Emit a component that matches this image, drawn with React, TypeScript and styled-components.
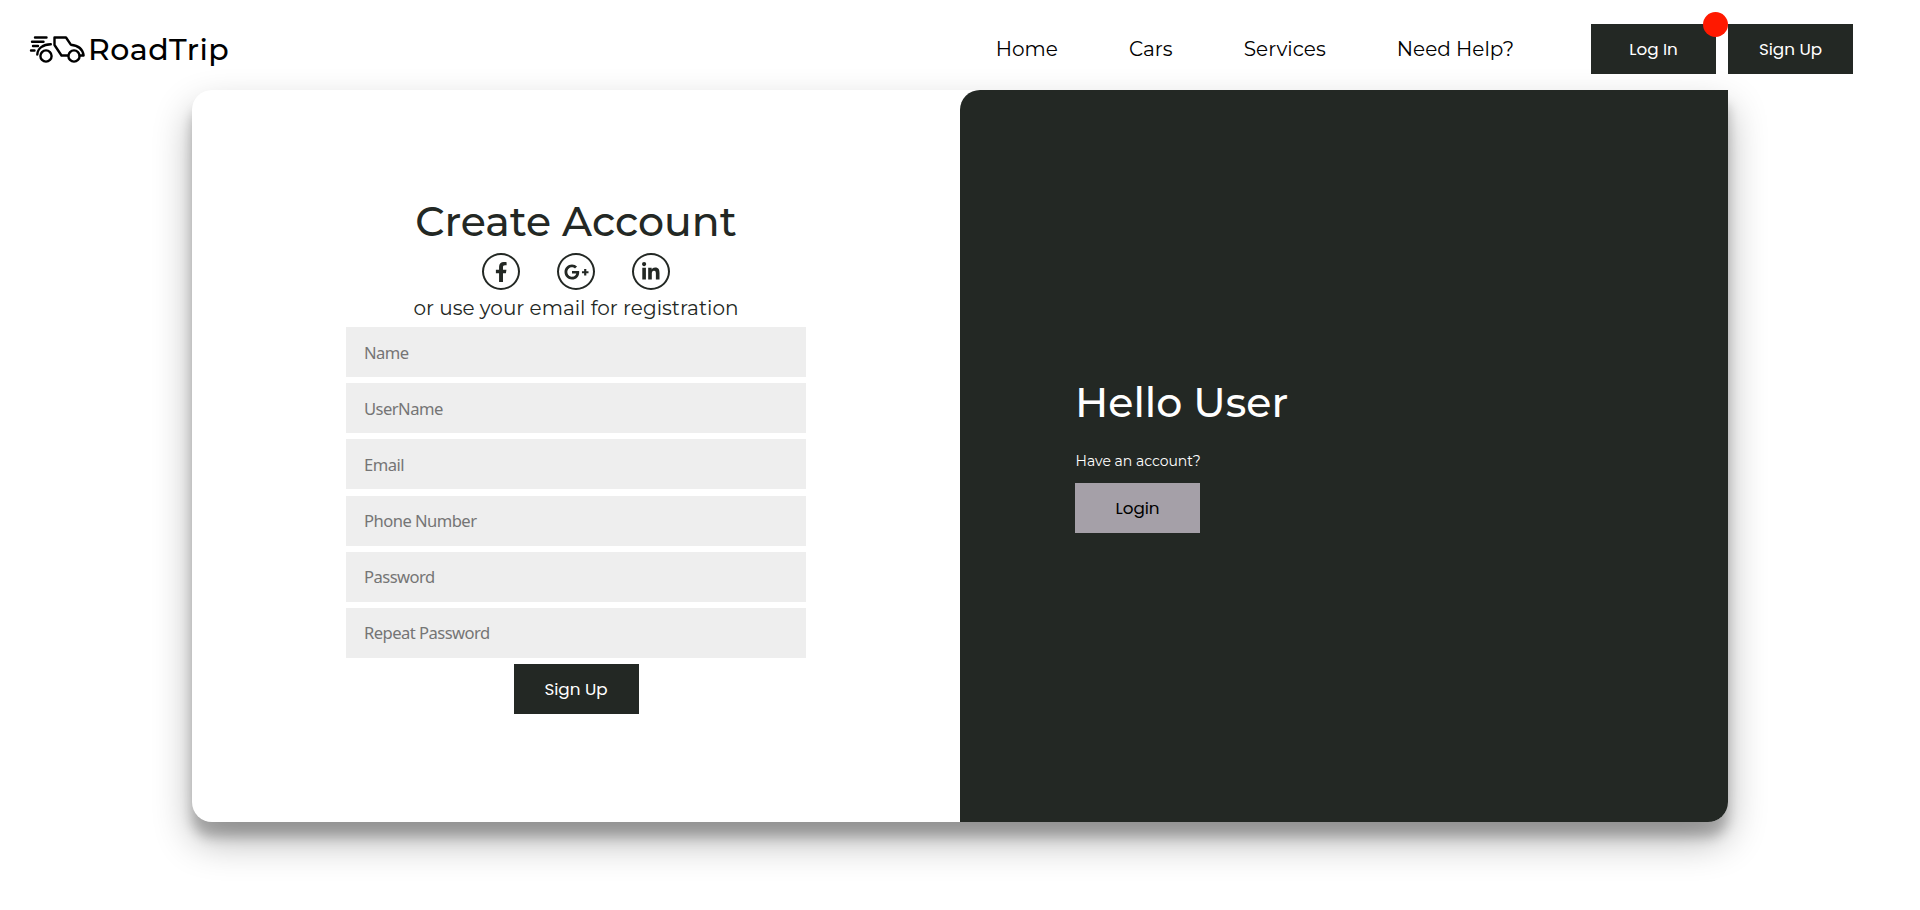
import React from 'react';
import styled, { createGlobalStyle } from 'styled-components';
import { FaFacebookF, FaGooglePlusG, FaLinkedinIn } from 'react-icons/fa';

const GlobalStyle = createGlobalStyle`
  * { box-sizing: border-box; }
  html, body { margin: 0; padding: 0; background: #fff; }
  body { font-family: Montserrat, Inter, sans-serif; color: #232824; overflow: hidden; }
  h1, p { margin: 0; }
`;

const Page = styled.div`
  height: 910px;
  background: #fff;
`;

const Header = styled.header`
  display: flex;
  align-items: flex-start;
  height: 90px;
  padding: 24px 67px 0 29px;
`;

const Logo = styled.a`
  display: flex;
  align-items: center;
  height: 50px;
  color: #000;
  font-size: 30px;
  font-weight: 500;
  letter-spacing: 0.5px;

  svg { width: 58px; height: 32px; margin-right: 1px; }
`;

const Nav = styled.nav`
  display: flex;
  gap: 71.2px;
  height: 50px;
  margin-left: auto;
  margin-right: 77px;
  line-height: 50px;
  font-size: 20px;
  color: #000;
`;

const Actions = styled.div`
  display: flex;
  gap: 12px;
`;

const Button = styled.button<{ $muted?: boolean }>`
  position: relative;
  width: 125px;
  height: 50px;
  padding: 0;
  border: 0;
  background: ${(p) => (p.$muted ? '#a5a0a8' : '#232824')};
  color: ${(p) => (p.$muted ? '#000' : '#fff')};
  font: 400 16.8px Poppins, Inter, sans-serif;
`;

const Badge = styled.span`
  position: absolute;
  top: -12px;
  right: -12px;
  width: 25px;
  height: 25px;
  border-radius: 50%;
  background: #ff1900;
`;

const Card = styled.main`
  display: grid;
  grid-template-columns: 1fr 1fr;
  width: 1536px;
  height: 732px;
  margin: 0 auto;
  border-radius: 20px 0 20px 20px;
  background: #fff;
  box-shadow: 0 19px 38px rgba(0, 0, 0, 0.3), 0 15px 12px rgba(0, 0, 0, 0.22);
`;

const FormPanel = styled.form`
  display: flex;
  flex-direction: column;
  align-items: center;
  padding-top: 106px;
`;

const Title = styled.h1`
  line-height: 50px;
  font-size: 41px;
  font-weight: 500;
`;

const Socials = styled.div`
  display: flex;
  gap: 37px;
  margin: 7px 0 6px;
`;

const SocialLink = styled.a<{ $iconWidth: number }>`
  display: flex;
  align-items: center;
  justify-content: center;
  width: 38px;
  height: 37px;
  border: 2px solid #232824;
  border-radius: 50%;

  svg { width: ${(p) => p.$iconWidth}px; height: 20px; }
`;

const Hint = styled.p`
  margin-bottom: 7px;
  font-size: 20px;
  line-height: 24px;
`;

const Fields = styled.div`
  display: flex;
  flex-direction: column;
  gap: 6.2px;
  width: 460px;
  margin-bottom: 6px;
`;

const Input = styled.input`
  height: 50px;
  padding: 0 18px;
  border: 0;
  background: #eee;
  font: 400 16.6px "Noto Sans", sans-serif;
  letter-spacing: -0.55px;

  &::placeholder { color: #757575; opacity: 1; }
`;

const WelcomePanel = styled.section`
  padding: 287px 0 0 115px;
  border-radius: 20px 0 20px 0;
  background: #232824;
  color: #fff;
`;

const Question = styled.p`
  margin: 25px 0 13px;
  padding-left: 0.5px;
  font-size: 14px;
  line-height: 18px;
`;

const links = ['Home', 'Cars', 'Services', 'Need Help?'];
const fields = ['Name', 'UserName', 'Email', 'Phone Number', 'Password', 'Repeat Password'];

const CarIcon = () => (
  <svg viewBox="0 0 58 32" fill="none" stroke="#000" strokeWidth="2.4" strokeLinecap="round" strokeLinejoin="round">
    <path d="M6 4.5h11.5M3 8.7h11.5M4 13h5M2 17.5h3.5" />
    <path d="M8.3 21.5C8.6 15.5 14 11.3 21.8 11.2" />
    <circle cx="17" cy="23" r="5.6" />
    <path d="M39.2 22.5H32.5L25.5 12V4.5H37l4.8 7.2c8 .8 12 4 12.8 10.8h-4" />
    <circle cx="45" cy="23" r="5.6" />
  </svg>
);

export default function App() {
  return (
    <Page>
      <GlobalStyle />
      <Header>
        <Logo><CarIcon />RoadTrip</Logo>
        <Nav>{links.map((link) => <a key={link}>{link}</a>)}</Nav>
        <Actions>
          <Button>Log In<Badge /></Button>
          <Button>Sign Up</Button>
        </Actions>
      </Header>
      <Card>
        <FormPanel>
          <Title>Create Account</Title>
          <Socials>
            <SocialLink $iconWidth={12.5}><FaFacebookF /></SocialLink>
            <SocialLink $iconWidth={25}><FaGooglePlusG /></SocialLink>
            <SocialLink $iconWidth={17.5}><FaLinkedinIn /></SocialLink>
          </Socials>
          <Hint>or use your email for registration</Hint>
          <Fields>
            {fields.map((field) => <Input key={field} placeholder={field} />)}
          </Fields>
          <Button type="button">Sign Up</Button>
        </FormPanel>
        <WelcomePanel>
          <Title>Hello User</Title>
          <Question>Have an account?</Question>
          <Button $muted>Login</Button>
        </WelcomePanel>
      </Card>
    </Page>
  );
}
